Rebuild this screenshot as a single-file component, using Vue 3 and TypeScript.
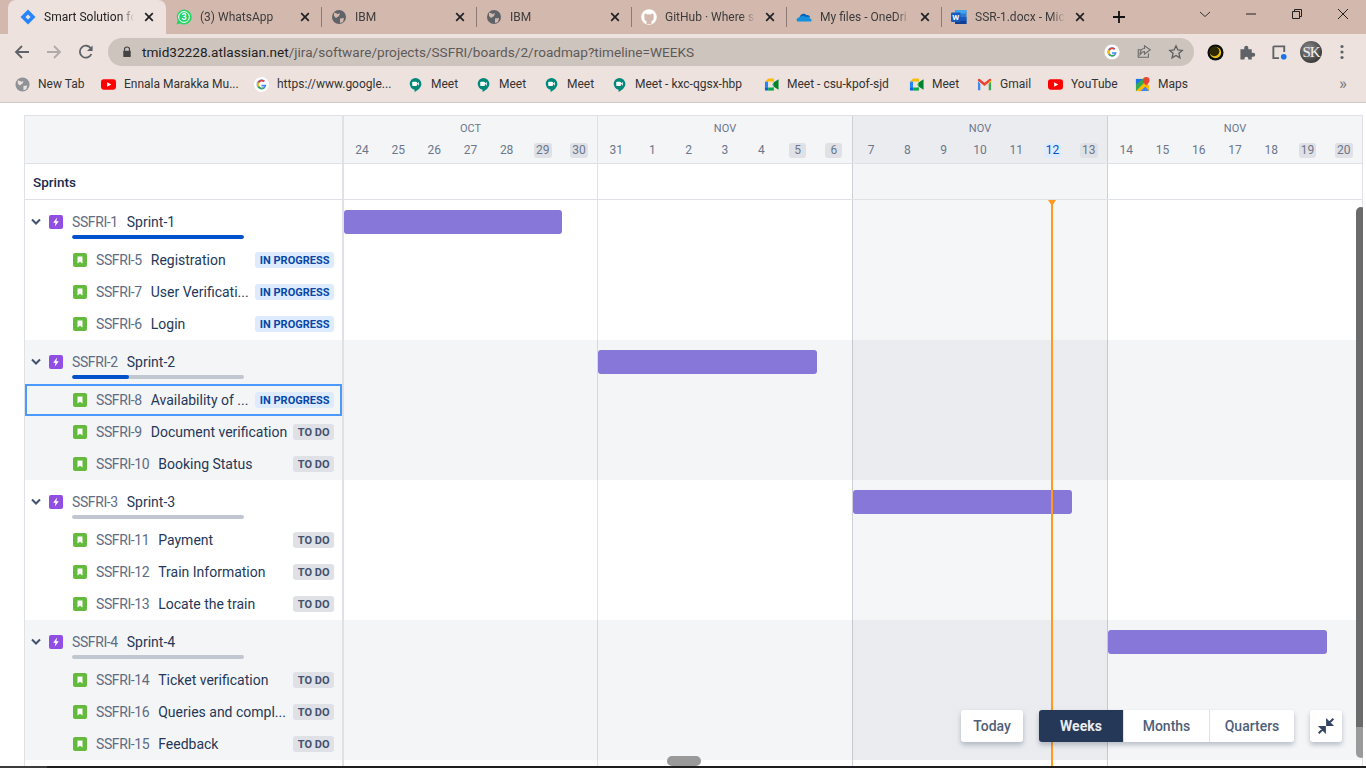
<script setup lang="ts">
interface Issue { key: string; name: string; status: 'IN PROGRESS' | 'TO DO'; focus?: boolean }
interface Sprint { key: string; name: string; done: number; start: number; width: number; issues: Issue[] }

const tabs = [
  { title: 'Smart Solution fo', icon: 'jira', active: true },
  { title: '(3) WhatsApp', icon: 'wa' },
  { title: 'IBM', icon: 'globe' },
  { title: 'IBM', icon: 'globe' },
  { title: 'GitHub · Where s', icon: 'gh' },
  { title: 'My files - OneDri', icon: 'od' },
  { title: 'SSR-1.docx - Mic', icon: 'word' },
]

const bookmarks = [
  { title: 'New Tab', icon: 'globe', w: 86 },
  { title: 'Ennala Marakka Mu...', icon: 'yt', w: 153 },
  { title: 'https://www.google...', icon: 'g', w: 154 },
  { title: 'Meet', icon: 'hang', w: 68 },
  { title: 'Meet', icon: 'hang', w: 68 },
  { title: 'Meet', icon: 'hang', w: 68 },
  { title: 'Meet - kxc-qgsx-hbp', icon: 'hang', w: 152 },
  { title: 'Meet - csu-kpof-sjd', icon: 'meet', w: 145 },
  { title: 'Meet', icon: 'meet', w: 68 },
  { title: 'Gmail', icon: 'gmail', w: 71 },
  { title: 'YouTube', icon: 'yt', w: 87 },
  { title: 'Maps', icon: 'maps', w: 60 },
]

const weeks = [
  { month: 'OCT', days: [24, 25, 26, 27, 28, 29, 30] },
  { month: 'NOV', days: [31, 1, 2, 3, 4, 5, 6] },
  { month: 'NOV', days: [7, 8, 9, 10, 11, 12, 13], current: true },
  { month: 'NOV', days: [14, 15, 16, 17, 18, 19, 20] },
]

const sprints: Sprint[] = [
  {
    key: 'SSFRI-1', name: 'Sprint-1', done: 100, start: 0, width: 218,
    issues: [
      { key: 'SSFRI-5', name: 'Registration', status: 'IN PROGRESS' },
      { key: 'SSFRI-7', name: 'User Verificati...', status: 'IN PROGRESS' },
      { key: 'SSFRI-6', name: 'Login', status: 'IN PROGRESS' },
    ],
  },
  {
    key: 'SSFRI-2', name: 'Sprint-2', done: 33, start: 254, width: 219,
    issues: [
      { key: 'SSFRI-8', name: 'Availability of ...', status: 'IN PROGRESS', focus: true },
      { key: 'SSFRI-9', name: 'Document verification', status: 'TO DO' },
      { key: 'SSFRI-10', name: 'Booking Status', status: 'TO DO' },
    ],
  },
  {
    key: 'SSFRI-3', name: 'Sprint-3', done: 0, start: 509, width: 219,
    issues: [
      { key: 'SSFRI-11', name: 'Payment', status: 'TO DO' },
      { key: 'SSFRI-12', name: 'Train Information', status: 'TO DO' },
      { key: 'SSFRI-13', name: 'Locate the train', status: 'TO DO' },
    ],
  },
  {
    key: 'SSFRI-4', name: 'Sprint-4', done: 0, start: 764, width: 219,
    issues: [
      { key: 'SSFRI-14', name: 'Ticket verification', status: 'TO DO' },
      { key: 'SSFRI-16', name: 'Queries and compl...', status: 'TO DO' },
      { key: 'SSFRI-15', name: 'Feedback', status: 'TO DO' },
    ],
  },
]

function dayClass(week: { current?: boolean }, n: number, day: number): string {
  if (week.current && day === 12) return 'day today'
  return n >= 5 ? 'day weekend' : 'day'
}
</script>

<template>
  <div class="screen">
    <div class="tabstrip">
      <div v-for="(tab, n) in tabs" :key="n" class="tab" :class="{ active: tab.active }">
        <svg class="fav" viewBox="0 0 16 16">
          <template v-if="tab.icon === 'jira'">
            <path d="M8 .5 15.500 8 8 15.500 .5 8Z" fill="#2684ff" />
            <path d="M8 5.400 10.600 8 8 10.600 5.400 8Z" fill="#ede2de" />
          </template>
          <template v-else-if="tab.icon === 'wa'">
            <path d="M.5 15.500 1.700 11.500A7.400 7.400 0 1 1 4.500 14.400Z" fill="#25d366" />
            <circle cx="8" cy="8" r="5.400" fill="#25d366" stroke="#fff" stroke-width="1" />
            <text x="8" y="11.200" text-anchor="middle" class="wa-n">3</text>
          </template>
          <template v-else-if="tab.icon === 'globe'">
            <circle cx="8" cy="8" r="7" fill="#5f6368" />
            <path d="M3 3.500 7 5 9 4 8 7 5 9 3 7ZM9 9.500 13 9 12 13 9 14Z" fill="#d3b8ae" />
          </template>
          <template v-else-if="tab.icon === 'gh'">
            <circle cx="8" cy="8" r="7.800" fill="#fff" />
            <path d="M5.500 15V12.200C3.800 11.400 3 10 3.400 8 3.200 6.600 3.400 5.400 4 4.600 5 4.800 5.600 5 6.200 5.500A7 7 0 0 1 9.800 5.500C10.400 5 11 4.800 12 4.600 12.600 5.400 12.800 6.600 12.600 8 13 10 12.200 11.400 10.500 12.200V15Z" fill="#d3b8ae" />
          </template>
          <template v-else-if="tab.icon === 'od'">
            <path d="M3.500 8.500C4 5.200 8 3.500 10.500 6.200 12.500 5.800 14 7 14 8.500Z" fill="#0364b8" />
            <path d="M1.200 12.500C0 11 .8 8.800 3 8.600 4.500 6.800 8 6.400 10 8 12 7.400 13.600 8 14 9.400 15.600 9.800 16.200 11.600 15 12.500Z" fill="#1490df" />
          </template>
          <template v-else>
            <rect x="4" y="1" width="11.500" height="14" rx="1" fill="#2b7cd3" />
            <rect x="4" y="1" width="11.500" height="3.500" rx="1" fill="#41a5ee" />
            <rect x="4" y="8" width="11.500" height="3.500" fill="#185abd" />
            <rect x="4" y="11.500" width="11.500" height="3.500" fill="#103f91" />
            <rect x="0" y="3.500" width="9.500" height="9.500" rx="1" fill="#185abd" />
            <text x="4.750" y="11.200" text-anchor="middle" class="w-n">W</text>
          </template>
        </svg>
        <span class="tab-title">{{ tab.title }}</span>
        <svg class="tab-x" viewBox="0 0 10 10"><path d="M1.200 1.200 8.800 8.800M8.800 1.200 1.200 8.800" stroke="#202124" stroke-width="1.700" /></svg>
      </div>
      <svg class="newtab" viewBox="0 0 12 12"><path d="M6 0V12M0 6H12" stroke="#111" stroke-width="1.800" /></svg>
      <div class="winctl">
        <svg viewBox="0 0 12 12" class="wc"><path d="M1 4 6 8.500 11 4" stroke="#333" fill="none" /></svg>
        <svg viewBox="0 0 12 12" class="wc"><path d="M1 6H11" stroke="#222" /></svg>
        <svg viewBox="0 0 12 12" class="wc"><path d="M3.500 3V1.500H10.500V8.500H8.500M1.500 3.500H8.500V10.500H1.500Z" stroke="#222" fill="none" /></svg>
        <svg viewBox="0 0 12 12" class="wc"><path d="M1 1 11 11M11 1 1 11" stroke="#222" /></svg>
      </div>
    </div>

    <div class="toolbar">
      <svg class="nav" viewBox="0 0 16 16"><path d="M15 8H2M8 2 2 8 8 14" stroke="#5f6368" stroke-width="1.800" fill="none" /></svg>
      <svg class="nav" viewBox="0 0 16 16"><path d="M1 8H14M8 2 14 8 8 14" stroke="#b0aaa8" stroke-width="1.800" fill="none" /></svg>
      <svg class="nav" viewBox="0 0 16 16"><path d="M13.400 10A6 6 0 1 1 13 4.600" stroke="#5f6368" stroke-width="1.800" fill="none" /><path d="M14.600 1.400V7H9Z" fill="#5f6368" /></svg>
      <div class="omnibox">
        <svg class="lock" viewBox="0 0 12 14"><path d="M3 6V4A3 3 0 0 1 9 4V6" stroke="#444" stroke-width="1.400" fill="none" /><rect x="1.500" y="5.500" width="9" height="7.500" rx="1" fill="#444" /></svg>
        <span class="url"><b>tmid32228.atlassian.net</b>/jira/software/projects/SSFRI/boards/2/roadmap?timeline=WEEKS</span>
        <span class="omni-gap"></span>
        <svg class="omni-i" viewBox="0 0 18 18">
          <circle cx="9" cy="9" r="8.500" fill="#fff" />
          <path d="M14.200 9.200H9V11H12.200A3.400 3.400 0 1 1 11.300 6.400L12.600 5.100A5.200 5.200 0 1 0 14.200 9.200Z" fill="#4285f4" />
          <path d="M5 6.200A5.200 5.200 0 0 1 12.600 5.100L11.300 6.400A3.400 3.400 0 0 0 6.500 7.400Z" fill="#ea4335" />
          <path d="M5 6.200 6.500 7.400A3.400 3.400 0 0 0 6.500 10.600L5 11.800A5.200 5.200 0 0 1 5 6.200Z" fill="#fbbc05" />
          <path d="M5 11.800 6.500 10.600A3.400 3.400 0 0 0 11 11.900L12.400 13A5.200 5.200 0 0 1 5 11.800Z" fill="#34a853" />
        </svg>
        <svg class="omni-i" viewBox="0 0 18 18"><path d="M14 10.500V15H2.500V6.500H6M9.500 8.500V11.500L16 6.500 9.500 2V5C6 5 4.500 8 4.500 12 6 9.500 7.500 8.500 9.500 8.500Z" stroke="#6a6a6a" stroke-width="1.200" fill="none" /></svg>
        <svg class="omni-i" viewBox="0 0 18 18"><path d="M9 2 11.100 6.700 16 7.200 12.300 10.500 13.400 15.500 9 12.900 4.600 15.500 5.700 10.500 2 7.200 6.900 6.700Z" stroke="#5f5f5f" stroke-width="1.500" fill="none" /></svg>
      </div>
      <svg class="ext" viewBox="0 0 18 18"><circle cx="9" cy="9" r="8.500" fill="#0c0c0c" /><circle cx="9" cy="9" r="6" fill="#e2bd10" /><circle cx="7.800" cy="7.800" r="5.200" fill="#2e2705" /></svg>
      <svg class="ext" viewBox="0 0 18 18"><path d="M1.500 5.500H5.500V4A2.200 2.200 0 0 1 9.900 4V5.500H13.500V9.200H15A2.200 2.200 0 0 1 15 13.600H13.500V16.500H9.800V15.500A2 2 0 0 0 5.800 15.500V16.500H1.500Z" fill="#5f6368" /></svg>
      <svg class="ext" viewBox="0 0 18 18"><path d="M2.500 2.500H14V8.500M8.500 15H2.500V2.500" stroke="#5f6368" stroke-width="2" fill="none" /><circle cx="13.500" cy="13.500" r="3" fill="#1a73e8" /></svg>
      <div class="avatar">SK</div>
      <svg class="menu" viewBox="0 0 4 16"><circle cx="2" cy="2.500" r="1.600" /><circle cx="2" cy="8" r="1.600" /><circle cx="2" cy="13.500" r="1.600" /></svg>
    </div>

    <div class="bookmarks">
      <div v-for="(b, n) in bookmarks" :key="n" class="bm" :style="{ width: b.w + 'px' }">
        <svg class="bm-i" viewBox="0 0 16 16">
          <template v-if="b.icon === 'globe'">
            <circle cx="8" cy="8" r="7.500" fill="#8f9296" />
            <path d="M3 3.500 7 5 9 4 8 7 5 9 3 7ZM9 9.500 13 9 12 13 9 14Z" fill="#ede2de" />
          </template>
          <template v-else-if="b.icon === 'yt'">
            <rect x="0" y="2.500" width="16" height="11" rx="3" fill="#f00" />
            <path d="M6.500 5.500 11 8 6.500 10.500Z" fill="#fff" />
          </template>
          <template v-else-if="b.icon === 'g'">
            <circle cx="8" cy="8" r="8" fill="#fff" />
            <path d="M13.200 8.200H8V10H11.200A3.400 3.400 0 1 1 10.300 5.400L11.600 4.100A5.200 5.200 0 1 0 13.200 8.200Z" fill="#4285f4" />
            <path d="M4 5.200A5.200 5.200 0 0 1 11.600 4.100L10.300 5.400A3.400 3.400 0 0 0 5.500 6.400Z" fill="#ea4335" />
            <path d="M4 5.200 5.500 6.400A3.400 3.400 0 0 0 5.500 9.600L4 10.800A5.200 5.200 0 0 1 4 5.200Z" fill="#fbbc05" />
            <path d="M4 10.800 5.500 9.600A3.400 3.400 0 0 0 10 10.900L11.400 12A5.200 5.200 0 0 1 4 10.800Z" fill="#34a853" />
          </template>
          <template v-else-if="b.icon === 'hang'">
            <path d="M8 1A6.300 6.300 0 0 0 7 13.500V16C11 14 14.300 11 14.300 7.300A6.300 6.300 0 0 0 8 1Z" fill="#00897b" />
            <rect x="4.500" y="5" width="5" height="4.500" rx=".8" fill="#fff" />
            <path d="M9.500 7 11.500 5.300V9.200Z" fill="#fff" />
          </template>
          <template v-else-if="b.icon === 'meet'">
            <path d="M1 5 4.500 1.500H10.500V5Z" fill="#fbbc05" />
            <path d="M1 5H4.500V11H1Z" fill="#2684fc" />
            <path d="M1 11H4.500V14.500H2A1 1 0 0 1 1 13.500Z" fill="#0066da" />
            <path d="M4.500 11H10.500V14.500H4.500Z" fill="#00ac47" />
            <path d="M10.500 5.500 15.500 2.500V13.500L10.500 10.500Z" fill="#00832d" />
            <path d="M10.500 1.500V5.500L8.500 8 10.500 10.500V14.500Z" fill="#00ac47" />
            <path d="M4.500 5H9V11H4.500Z" fill="#ede2de" />
          </template>
          <template v-else-if="b.icon === 'gmail'">
            <path d="M1 4V14H3.500V7.500Z" fill="#4285f4" />
            <path d="M15 4V14H12.500V7.500Z" fill="#34a853" />
            <path d="M1 4 8 9.500 15 4 15 3A1.300 1.300 0 0 0 13 2.200L8 6 3 2.200A1.300 1.300 0 0 0 1 3Z" fill="#ea4335" />
            <path d="M12.500 7.500 15 5V3.500L12.500 5.500Z" fill="#fbbc05" />
          </template>
          <template v-else>
            <path d="M1 2H11V15H1Z" fill="#34a853" />
            <path d="M1 15 11 5 15 9V15Z" fill="#fbbc05" />
            <path d="M1 2H8L1 8Z" fill="#1a73e8" />
            <path d="M6 15 11 10 15 15Z" fill="#4285f4" />
            <path d="M12 0A3.500 3.500 0 0 0 8.500 3.500C8.500 6 12 9 12 9S15.500 6 15.500 3.500A3.500 3.500 0 0 0 12 0Z" fill="#ea4335" />
          </template>
        </svg>
        <span>{{ b.title }}</span>
      </div>
      <span class="bm-more">»</span>
    </div>

    <main class="page">
      <div class="roadmap">
        <div class="side">
          <div class="side-head"></div>
          <div class="side-title">Sprints</div>
          <section v-for="s in sprints" :key="s.key" class="group">
            <div class="sprint-row">
              <svg class="chev" viewBox="0 0 10 8"><path d="M1 1.500 5 5.500 9 1.500" stroke="#42526e" stroke-width="2" fill="none" /></svg>
              <svg class="ico" viewBox="0 0 14 14">
                <rect width="14" height="14" rx="2" fill="#904ee2" />
                <path d="M8 2.500 4.200 7.800H6.500L5.800 11.500 9.800 6.200H7.400Z" fill="#fff" />
              </svg>
              <div class="sprint-text">
                <div class="row-text"><span class="key">{{ s.key }}</span><span class="name">{{ s.name }}</span></div>
                <div class="progress"><div class="progress-fill" :style="{ width: s.done + '%' }"></div></div>
              </div>
            </div>
            <div v-for="it in s.issues" :key="it.key" class="issue-row" :class="{ focus: it.focus }">
              <svg class="ico" viewBox="0 0 14 14">
                <rect width="14" height="14" rx="2" fill="#63ba3c" />
                <path d="M4.500 3.500H9.500V10.500L7 8.700 4.500 10.500Z" fill="#fff" />
              </svg>
              <span class="row-text issue-text"><span class="key">{{ it.key }}</span><span class="name">{{ it.name }}</span></span>
              <span class="lozenge" :class="it.status === 'TO DO' ? 'todo' : 'prog'">{{ it.status }}</span>
            </div>
          </section>
        </div>

        <div class="timeline">
          <div class="tl-head">
            <div v-for="(w, n) in weeks" :key="n" class="week-head" :class="{ current: w.current }">
              <div class="month">{{ w.month }}</div>
              <div class="days">
                <span v-for="(d, i) in w.days" :key="d" :class="dayClass(w, i, d)">{{ d }}</span>
              </div>
            </div>
          </div>
          <div class="tl-title">
            <div v-for="(w, n) in weeks" :key="n" class="cell" :class="{ current: w.current }"></div>
          </div>
          <div class="tl-body">
            <div class="cols">
              <div v-for="(w, n) in weeks" :key="n" class="col" :class="{ current: w.current }"></div>
            </div>
            <div v-for="s in sprints" :key="s.key" class="tl-group">
              <div class="bar" :style="{ marginLeft: s.start + 'px', width: s.width + 'px' }"></div>
            </div>
            <div class="today-line"><i></i></div>
          </div>
        </div>

        <div class="controls">
          <button class="btn today-btn">Today</button>
          <div class="seg">
            <button class="btn on">Weeks</button>
            <button class="btn">Months</button>
            <button class="btn">Quarters</button>
          </div>
          <button class="btn collapse" aria-label="Collapse">
            <svg viewBox="0 0 16 16"><path d="M1.500 14.500 6.200 9.800M3 9H7V13ZM14.500 1.500 9.800 6.200M13 7H9V3Z" stroke="#344563" stroke-width="1.800" fill="#344563" /></svg>
          </button>
        </div>

        <div class="vscroll"></div>
        <div class="hscroll"></div>
      </div>
    </main>
    <div class="taskbar-edge"></div>
  </div>
</template>

<style scoped>
.screen {
  width: 1366px;
  height: 768px;
  overflow: hidden;
  display: flex;
  flex-direction: column;
  background: #fff;
  font-family: Roboto, "Open Sans", sans-serif;
  color: #172b4d;
  position: relative;
}

.tabstrip {
  height: 34px;
  flex: none;
  background: #d3b8ae;
  display: flex;
  padding-left: 8px;
  align-items: stretch;
  position: relative;
}
.tab {
  width: 155px;
  flex: none;
  display: flex;
  align-items: center;
  padding: 0 9px 1px 10px;
  box-sizing: border-box;
  gap: 8px;
  font-size: 12px;
  color: #3c3c3c;
  position: relative;
}
.tab + .tab::before {
  content: "";
  position: absolute;
  left: 0;
  top: 7px;
  height: 20px;
  width: 1px;
  background: #8d7a74;
}
.tab.active {
  width: 158px;
  padding-left: 12px;
  padding-right: 10px;
  background: #ede2de;
  border-radius: 8px 8px 0 0;
  color: #222;
}
.tab.active + .tab::before { display: none; }
.fav { width: 16px; height: 16px; flex: none; }
.wa-n { font: 700 9px Roboto, sans-serif; fill: #fff; }
.w-n { font: 700 8px Roboto, sans-serif; fill: #fff; }
.tab-title {
  flex: 1;
  min-width: 0;
  overflow: hidden;
  white-space: nowrap;
  -webkit-mask-image: linear-gradient(to right, #000 85%, transparent);
  mask-image: linear-gradient(to right, #000 85%, transparent);
}
.tab-x { width: 10px; height: 10px; flex: none; margin: 0 2px; }
.newtab { width: 12px; height: 12px; flex: none; margin: 11px 0 0 17px; }
.winctl {
  margin-left: auto;
  display: flex;
  gap: 34px;
  padding-right: 17px;
}
.wc { width: 12px; height: 12px; margin: 8px 0 0; }

.toolbar {
  height: 34px;
  flex: none;
  background: #ede2de;
  display: flex;
  align-items: center;
  padding: 2px 0 0 14px;
  box-sizing: border-box;
  position: relative;
}
.nav { width: 16px; height: 16px; flex: none; margin-right: 16px; }
.omnibox {
  width: 1086px;
  height: 28px;
  margin-left: -2px;
  background: #cdc4be;
  border-radius: 14px;
  display: flex;
  align-items: center;
  box-sizing: border-box;
  padding: 0 10px 0 14px;
  flex: none;
}
.lock { width: 10px; height: 12px; flex: none; margin-right: 10px; }
.url { color: #5f5a58; white-space: nowrap; font-size: 13.600px; }
.url b { font-weight: 400; color: #222; }
.omni-gap { flex: 1; }
.omni-i { width: 16px; height: 16px; flex: none; margin-left: 16px; }
.ext { width: 17px; height: 17px; flex: none; margin-left: 15px; }
.omnibox + .ext { margin-left: 13px; }
.avatar {
  width: 22px;
  height: 22px;
  border-radius: 50%;
  background: radial-gradient(circle at 40% 35%, #8a8a8a, #1f1f1f);
  color: #f2f2f2;
  font: 400 15px/22px "Liberation Serif", serif;
  letter-spacing: -1px;
  text-align: center;
  margin-left: 12px;
  flex: none;
}
.menu { width: 4px; height: 16px; fill: #5f6368; margin-left: 18px; flex: none; }

.bookmarks {
  height: 35px;
  flex: none;
  box-sizing: border-box;
  background: #ede2de;
  border-bottom: 1px solid #cfc9c6;
  display: flex;
  align-items: center;
  padding: 0 0 2px 15px;
  font-size: 12px;
  color: #333;
  position: relative;
}
.bm { display: flex; align-items: center; gap: 8px; white-space: nowrap; flex: none; }
.bm-i { width: 15px; height: 15px; flex: none; }
.bm-more { position: absolute; right: 19px; top: 5px; font-size: 17px; color: #777; }

.page {
  flex: 1;
  min-height: 0;
  padding: 12px 3px 0 24px;
  overflow: hidden;
}
.roadmap {
  width: 1339px;
  height: 651px;
  display: flex;
  position: relative;
  overflow: hidden;
  border-top: 1px solid #dfe1e6;
  border-left: 1px solid #dfe1e6;
  box-sizing: border-box;
}
.side {
  width: 319px;
  flex: none;
  border-right: 2px solid #dfe1e6;
  box-sizing: border-box;
}
.side-head {
  height: 48px;
  box-sizing: border-box;
  background: #f4f5f7;
  border-bottom: 1px solid #dfe1e6;
}
.side-title {
  height: 36px;
  box-sizing: border-box;
  padding: 0 8px;
  display: flex;
  align-items: center;
  font-size: 13.500px;
  font-weight: 500;
  border-bottom: 1px solid #dfe1e6;
}
.group { height: 140px; }
.group:nth-of-type(even) { background: #f4f5f7; }
.sprint-row {
  height: 44px;
  display: flex;
  align-items: flex-start;
  padding: 12px 0 0 6px;
  box-sizing: border-box;
}
.chev { width: 10px; height: 8px; margin: 6px 8px 0 0; flex: none; }
.sprint-row .ico { margin: 3px 9px 0 0; }
.ico { width: 14px; height: 14px; flex: none; }
.sprint-text { width: 172px; }
.row-text { font-size: 14px; white-space: nowrap; line-height: 20px; }
.key { color: #5e6c84; margin-right: 9px; letter-spacing: -0.4px; }
.name { color: #253858; }
.progress {
  height: 4px;
  border-radius: 2px;
  background: #c1c7d0;
  margin-top: 3px;
  overflow: hidden;
}
.progress-fill { height: 100%; background: #0052cc; border-radius: 2px; }
.issue-row {
  height: 32px;
  display: flex;
  align-items: center;
  padding: 0 8px 0 48px;
  box-sizing: border-box;
}
.issue-row.focus {
  box-shadow: inset 0 0 0 2px #4c9aff;
}
.issue-row .ico { margin-right: 9px; }
.issue-text {
  flex: 1;
  min-width: 0;
  margin-right: 5px;
}
.lozenge {
  flex: none;
  font-size: 11px;
  font-weight: 700;
  line-height: 15px;
  padding: 1px 4.500px 0;
  border-radius: 3px;
  white-space: nowrap;
}
.lozenge.prog { background: #deebff; color: #0747a6; }
.lozenge.todo { background: #dfe1e6; color: #42526e; }

.timeline { flex: 1; min-width: 0; }
.tl-head { display: flex; height: 48px; box-sizing: border-box; border-bottom: 1px solid #dfe1e6; }
.week-head {
  width: 255px;
  flex: none;
  box-sizing: border-box;
  background: #f4f5f7;
  border-right: 1px solid #dfe1e6;
  padding-top: 5px;
}
.week-head:first-child, .cell:first-child, .col:first-child { width: 254px; }
.week-head.current { background: #ebecf0; }
.month { text-align: center; font-size: 11px; color: #6b778c; line-height: 16px; }
.days {
  display: grid;
  grid-template-columns: repeat(7, 1fr);
  margin-top: 6px;
}
.day {
  justify-self: center;
  font-size: 12px;
  line-height: 15px;
  color: #6b778c;
  padding: 0 2px;
  min-width: 13px;
  text-align: center;
  border-radius: 3px;
}
.day.weekend { background: #dfe1e6; }
.day.today { background: #deebff; color: #0052cc; }
.tl-title { display: flex; height: 36px; border-bottom: 1px solid #dfe1e6; box-sizing: border-box; }
.cell, .col { width: 255px; flex: none; box-sizing: border-box; border-right: 1px solid #dfe1e6; }
.cell:nth-child(2), .cell.current, .col:nth-child(2), .col.current,
.week-head:nth-child(2), .week-head.current { border-right-color: #cdd0d8; }
.cell.current { background: rgba(9, 30, 66, 0.045); }
.col.current { background: linear-gradient(rgba(9, 30, 66, 0.045) 560px, transparent 560px); }
.tl-body { position: relative; height: 567px; }
.cols { position: absolute; inset: 0; display: flex; }
.tl-group { height: 140px; padding-top: 10px; box-sizing: border-box; position: relative; }
.tl-group:nth-child(3), .tl-group:nth-child(5) { background: rgba(9, 30, 66, 0.045); }
.bar {
  height: 24px;
  border-radius: 3px;
  background: #8777d9;
}
.today-line {
  position: absolute;
  left: 707px;
  top: 0;
  bottom: 0;
  width: 2px;
  background: #ff991f;
}
.today-line i {
  position: absolute;
  left: -3px;
  top: 0;
  border: 4px solid transparent;
  border-top: 6px solid #ff991f;
  border-bottom: 0;
}

.controls {
  position: absolute;
  right: 21px;
  bottom: 24px;
  display: flex;
  gap: 16px;
  align-items: stretch;
}
.btn {
  border: 0;
  background: #fff;
  height: 32px;
  font: 500 14px Roboto, sans-serif;
  color: #505f79;
  padding: 0;
}
.today-btn, .collapse, .seg { box-shadow: 0 3px 5px rgba(9, 30, 66, 0.25); border-radius: 3px; }
.today-btn { width: 62px; }
.seg { display: flex; overflow: hidden; }
.seg .btn { width: 86px; }
.seg .btn:last-child { width: 85px; }
.seg .btn + .btn { border-left: 1px solid #dfe1e6; }
.seg .on { width: 84px; background: #253858; color: #ebecf0; font-weight: 700; }
.collapse { width: 32px; display: flex; align-items: center; justify-content: center; }
.collapse svg { width: 18px; height: 18px; }

.vscroll {
  position: absolute;
  right: -3px;
  top: 91px;
  width: 10px;
  height: 551px;
  background: linear-gradient(#6b6b6b 520px, #9a9a9a 520px);
  border-radius: 5px;
}
.hscroll {
  position: absolute;
  left: 642px;
  bottom: 0;
  width: 34px;
  height: 10px;
  background: #999;
  border-radius: 5px;
}
.taskbar-edge {
  position: absolute;
  left: 0;
  right: 0;
  bottom: 0;
  height: 2px;
  background: linear-gradient(to right, #3c3c3c 47px, #1f1f1f 47px);
}
</style>

<style>
html, body { margin: 0; background: #fff; }
</style>
